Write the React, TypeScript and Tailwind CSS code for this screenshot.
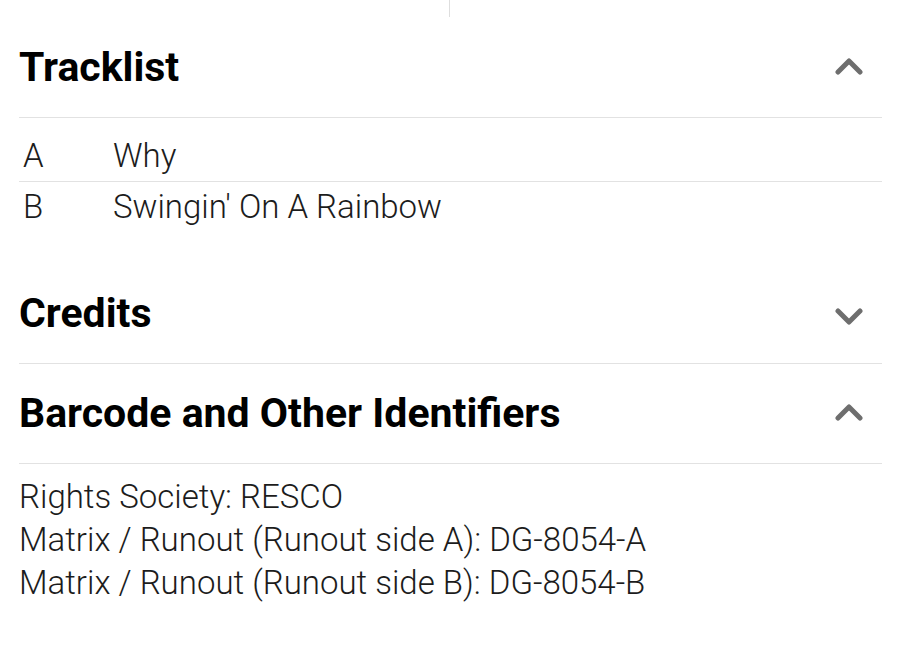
const tracks = [
  { pos: "A", title: "Why" },
  { pos: "B", title: "Swingin' On A Rainbow" },
];

const identifiers = [
  "Rights Society: RESCO",
  "Matrix / Runout (Runout side A): DG-8054-A",
  "Matrix / Runout (Runout side B): DG-8054-B",
];

function Chevron({ up }: { up?: boolean }) {
  return (
    <svg
      width="30"
      height="18"
      viewBox="0 0 30 18"
      className={up ? "shrink-0 -translate-y-[1px]" : "shrink-0 translate-y-[4px]"}
    >
      <path
        d={up ? "M4 15 L15 4 L26 15" : "M4 3 L15 14 L26 3"}
        fill="none"
        stroke="#6e6e6e"
        strokeWidth="5"
        strokeLinecap="round"
        strokeLinejoin="round"
      />
    </svg>
  );
}

function SectionHeader({ title, open }: { title: string; open?: boolean }) {
  return (
    <div className="flex items-center justify-between border-b border-[#e2e2e2] pt-[25px] pb-[26px]">
      <h2 className="text-[41px] leading-[48px] font-bold text-black">{title}</h2>
      <div className="mr-[18px] flex items-center">
        <Chevron up={open} />
      </div>
    </div>
  );
}

export default function App() {
  return (
    <main
      className="min-h-screen bg-white text-[#1c1c1c] overflow-hidden"
      style={{ fontFamily: "Roboto, 'Noto Sans', sans-serif" }}
    >
      <div className="flex h-[18px] justify-center">
        <div className="mr-[2px] w-px h-[17px] bg-[#dedede]" />
      </div>

      <div className="pl-[19px] pr-[18px]">
        {/* Tracklist */}
        <section>
          <SectionHeader title="Tracklist" open />
          <div className="mt-[13px] text-[33px] leading-[48px] font-light">
            {tracks.map((t, i) => (
              <div
                key={t.pos}
                className={`flex py-px ${i < tracks.length - 1 ? "border-b border-[#e2e2e2]" : ""}`}
              >
                <span className="w-[94px] pl-[4px]">{t.pos}</span>
                <span>{t.title}</span>
              </div>
            ))}
          </div>
        </section>

        {/* Credits */}
        <section className="mt-[32px]">
          <SectionHeader title="Credits" />
        </section>

        {/* Barcode and Other Identifiers */}
        <section>
          <SectionHeader title="Barcode and Other Identifiers" open />
          <div className="mt-[11px] text-[33px] leading-[43px] font-light">
            {identifiers.map((line) => (
              <p key={line}>{line}</p>
            ))}
          </div>
        </section>
      </div>
    </main>
  );
}
